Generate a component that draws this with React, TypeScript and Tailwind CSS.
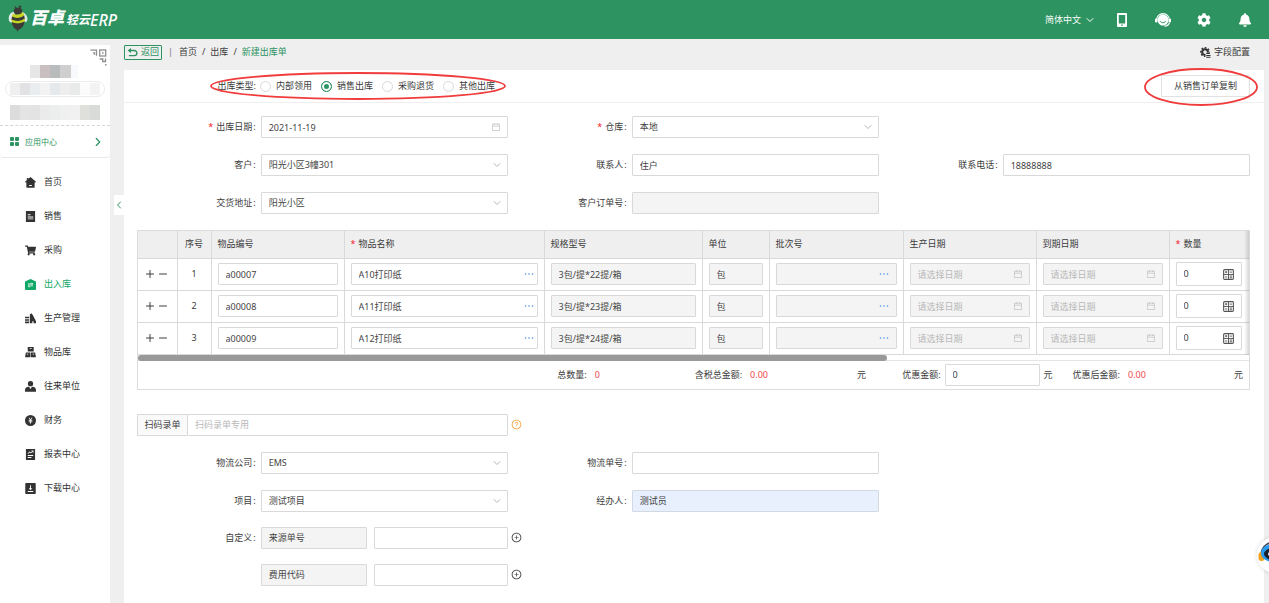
import React, { useState } from 'react';
import { ChevronDown, ChevronLeft, ChevronRight, Minus, Plus } from 'lucide-react';
import { FaBell, FaCog, FaShoppingCart } from 'react-icons/fa';
import {
  AiOutlineCalendar,
  AiOutlinePlusCircle,
  AiOutlineQuestionCircle,
} from 'react-icons/ai';

// Sidebar entries
const menuItems = [
  { key: 'home', label: '首页' },
  { key: 'sales', label: '销售' },
  { key: 'purchase', label: '采购' },
  { key: 'stock', label: '出入库' },
  { key: 'production', label: '生产管理' },
  { key: 'goods', label: '物品库' },
  { key: 'partners', label: '往来单位' },
  { key: 'finance', label: '财务' },
  { key: 'reports', label: '报表中心' },
  { key: 'downloads', label: '下载中心' },
];

// Outbound types
const outboundTypes = ['内部领用', '销售出库', '采购退货', '其他出库'];

// Order lines
const orderLines = [
  { code: 'a00007', name: 'A10打印纸', spec: '3包/提*22提/箱', unit: '包' },
  { code: 'a00008', name: 'A11打印纸', spec: '3包/提*23提/箱', unit: '包' },
  { code: 'a00009', name: 'A12打印纸', spec: '3包/提*24提/箱', unit: '包' },
];

const columns = [
  { title: '', width: 'w-[40px]' },
  { title: '序号', width: 'w-[34px]' },
  { title: '物品编号', width: 'w-[133px]' },
  { title: '物品名称', width: 'w-[200px]', required: true },
  { title: '规格型号', width: 'w-[158px]' },
  { title: '单位', width: 'w-[67px]' },
  { title: '批次号', width: 'w-[134px]' },
  { title: '生产日期', width: 'w-[133px]' },
  { title: '到期日期', width: 'w-[133px]' },
  { title: '数量', width: 'w-[81px]', required: true },
];

const boxClass =
  'block h-[22px] w-full rounded-[1px] border border-[#d9d9d9] bg-white px-[7px] text-[#444] outline-none placeholder:text-[#b8b8b8] disabled:bg-[#f4f4f4] disabled:opacity-100';

function BeeLogo() {
  return (
    <svg viewBox="0 0 20 27" className="h-[27px] w-5" aria-hidden="true">
      <path d="M8 3.5 6.8 1.2M12 3.5l1-2.4" stroke="#3b3a36" strokeWidth="1" fill="none" />
      <circle cx="11.8" cy="1.5" r="1" fill="#3b3a36" />
      <path d="M6.5 7C3 6.500.5 10 .7 14c.1 2.500 1.300 4 3.300 3.500L7 10z" fill="#dcebe3" />
      <path d="M13.500 7c3.200.3 6 3.800 6 7 0 2.400-1.500 3.700-3.500 3.200L13 10z" fill="#dcebe3" />
      <ellipse cx="10" cy="6" rx="4.200" ry="3.600" fill="#3b3a36" />
      <path d="M5 8.500c3 2 7 1.500 10-1.500l1.200 3.500c-3.500 3-8 3.500-12.200 1.300z" fill="#c6d420" />
      <path d="M4 11.500c4 2.300 8.700 1.800 12.200-1.200l.6 3.400c-3.800 2.800-8.800 3.200-13.300 1z" fill="#3b3a36" />
      <path d="M3.500 14.500c4.500 2.300 9.500 1.900 13.400-1l-.2 3c-3.700 2.500-8.700 2.900-12.900.8z" fill="#c6d420" />
      <path d="M3.800 17c4.200 2.200 9.200 1.800 12.900-.7-.4 4.500-3.200 7.500-6 8.300l-1.200 2.200-.8-2.100C6 23.500 4 20.500 3.800 17z" fill="#3b3a36" />
    </svg>
  );
}

function PhoneIcon() {
  return (
    <svg viewBox="0 0 16 16" className="size-4" aria-hidden="true">
      <path fill="currentColor" fillRule="evenodd" d="M4 1h8a1 1 0 0 1 1 1v12a1 1 0 0 1-1 1H4a1 1 0 0 1-1-1V2a1 1 0 0 1 1-1zm.8 2v8.500h6.400V3zM7.200 12.500v1.200h1.600v-1.200z" />
    </svg>
  );
}

function ServiceIcon() {
  return (
    <svg viewBox="0 0 16 16" className="size-4" aria-hidden="true">
      <path d="M1.600 8a6.400 6.400 0 0 1 12.800 0" fill="none" stroke="currentColor" strokeWidth="1.100" />
      <path fill="currentColor" d="M8 2.500A5.400 5.400 0 0 1 13.400 8c0 3-2.400 5.600-5.400 5.600S2.600 11 2.600 8 5 2.500 8 2.500z" />
      <rect x="0" y="6.500" width="2.500" height="4" rx="1" fill="currentColor" />
      <rect x="13.500" y="6.500" width="2.500" height="4" rx="1" fill="currentColor" />
      <path d="M5 9.200c1.500 2 4.500 2 6 0" fill="none" stroke="#2c9361" strokeWidth="1" />
      <path d="M14.500 10.500c-.6 2.200-2.200 3.500-5 3.800" fill="none" stroke="currentColor" strokeWidth="1.100" />
    </svg>
  );
}

function QrIcon() {
  return (
    <svg viewBox="0 0 17 17" className="size-[17px]" aria-hidden="true">
      <g fill="none" stroke="#8f8f8f" strokeWidth="1.300">
        <path d="M.5 1.200h6v5.500M3 3.800h1.500v2" />
        <rect x="9.700" y="1" width="6" height="6" />
        <path d="M9.700 10h3v2.500h2.800V9.500M12.500 9.800h1" />
      </g>
      <path fill="#8f8f8f" d="M12 3.300h1.500v1.500H12zM15 15h1.500v1.500H15z" />
    </svg>
  );
}

function MenuIcon({ name }: { name: string }) {
  if (name === 'purchase') {
    return <FaShoppingCart className="size-[11px]" />;
  }
  return (
    <svg viewBox="0 0 12 12" className="size-[11px]" fill="currentColor" fillRule="evenodd" aria-hidden="true">
      {name === 'home' && <path d="M6 0l6 5.200-.6.800h-.9v5.300a.5.5 0 0 1-.5.500H2a.5.5 0 0 1-.5-.5V6H.6L0 5.200 2 3.500V1.200h1.700V2zM4.500 8.800v1h3v-1z" />}
      {name === 'sales' && <path d="M1 0h10v12H1zM3 3.500v1.200h3V3.500zm0 2.400v1.200h6V5.900zM3 8.300v.8h6v-.8z" />}
      {name === 'stock' && <path d="M6 0l6 2.700V11a1 1 0 0 1-1 1H1a1 1 0 0 1-1-1V2.700zM3.200 5v1h5.600V5L7.200 3.700V5zm5.600 3V7H3.200v1l1.600 1.500V8z" />}
      {name === 'production' && <path d="M0 4h4.500v1.800H0zM0 6.700h4.500v1.800H0zM0 9.400h4.500v1.800H0zM5.300 11.200V1.500L7 .3l1.500 2L12 9v2.200H9.300V9H8v2.200z" />}
      {name === 'goods' && <path d="M3 0h6.500v4.800H3zM1 6h4.800v5.200H0zM6.400 6H11l1 5.200H6.400zM5.200 1v1h2V1zM2 7.300v1h1.600v-1zM8.400 7.300v1H10v-1z" />}
      {name === 'partners' && <path d="M6 0a2.900 2.900 0 1 1 0 5.800A2.900 2.900 0 0 1 6 0zM3.800 6.300h.7L6 9l1.500-2.700h.7C10.500 6.500 12 8 12 10v1.600H0V10c0-2 1.500-3.500 3.800-3.700z" />}
      {name === 'finance' && <path d="M6 0a6 6 0 1 1 0 12A6 6 0 0 1 6 0zM3.800 3l1.600 2.500H4v.9h1.500v.7H4V8h1.500v1.300h1V8H8v-.9H6.500v-.7H8v-.9H6.600L8.200 3H7.100L6 4.900 4.900 3z" />}
      {name === 'reports' && <path d="M1 0h10v12H1zM2.800 4.500l.7.700 1.800-1.500 1.200 1L8.500 2.800V4h.7V1.500H7v.7h.9L6.500 3.600l-1.200-1zM3 6.600v.9h6v-.9zM3 8.800v.9h4v-.9z" />}
      {name === 'downloads' && <path d="M1 0h10a.7.7 0 0 1 .7.700v10.600a.7.7 0 0 1-.7.700H1a.7.7 0 0 1-.7-.7V.7A.7.7 0 0 1 1 0zM5.500 2.500v3.300H4L6 8l2-2.200H6.500V2.500zM3 8.800v1h6v-1z" />}
    </svg>
  );
}

function CalculatorIcon() {
  return (
    <svg viewBox="0 0 12 12" className="size-[11px]" fill="none" stroke="#555" aria-hidden="true">
      <rect x=".7" y=".7" width="10.600" height="10.600" rx="1" strokeWidth="1.200" />
      <path d="M6 .7v10.600M.7 6h10.600M2.200 3.400h2.400M3.400 2.200v2.400M7.300 3.400h2.500M2.300 8.700h2.300M7.300 7.700h2.500M7.300 9.500h2.500" />
    </svg>
  );
}

function FieldConfigIcon() {
  return (
    <svg viewBox="0 0 12 12" className="size-[11px]" aria-hidden="true">
      <circle cx="5.500" cy="5.500" r="3.100" fill="none" stroke="#333" strokeWidth="2.200" />
      <circle cx="5.500" cy="5.500" r="4.700" fill="none" stroke="#333" strokeWidth="1.500" strokeDasharray="2 1.690" strokeDashoffset="1" />
      <rect x="6" y="6.200" width="6" height="6" fill="#efefef" />
      <path stroke="#333" strokeWidth="1.100" d="M6.800 7.200h4M6.800 9.200h4.700M6.800 11.200h4.700" />
    </svg>
  );
}

function Dots() {
  return (
    <svg viewBox="0 0 10 2" className="h-[2px] w-[10px]" fill="#4a90e2" aria-hidden="true">
      <circle cx="1.500" cy="1" r=".8" />
      <circle cx="5" cy="1" r=".8" />
      <circle cx="8.500" cy="1" r=".8" />
    </svg>
  );
}

function Field({ id, label, required, children }: {
  id?: string;
  label: string;
  required?: boolean;
  children: React.ReactNode;
}) {
  return (
    <div className="grid grid-cols-[1fr_2fr] items-center">
      <label htmlFor={id} className="flex justify-end gap-px pr-[5px]">
        {required && <span className="mr-[2px] text-[#f5222d]">*</span>}
        <span>{label}</span>
        {label && <span>:</span>}
      </label>
      {children}
    </div>
  );
}

function SelectBox({ id, value }: { id: string; value: string }) {
  return (
    <div className="relative">
      <select id={id} defaultValue={value} className={`${boxClass} appearance-none`}>
        <option>{value}</option>
      </select>
      <ChevronDown className="pointer-events-none absolute top-[5px] right-[5px] size-3 text-[#b5b5b5]" strokeWidth={2} />
    </div>
  );
}

function DateBox({ id, value, disabled, label }: {
  id?: string;
  value?: string;
  disabled?: boolean;
  label?: string;
}) {
  return (
    <div className="relative">
      <input
        id={id}
        type="text"
        aria-label={label}
        defaultValue={value}
        placeholder="请选择日期"
        disabled={disabled}
        className={boxClass}
      />
      <AiOutlineCalendar className="pointer-events-none absolute top-[6px] right-[7px] size-[10px] text-[#c4c4c4]" />
    </div>
  );
}

function Header() {
  return (
    <header className="flex h-[39px] shrink-0 items-center bg-[#2c9361] pr-4 pl-2 text-white">
      <a href="#" className="flex items-center pb-[3px]">
        <BeeLogo />
        <span className="ml-[2px] text-[17px] leading-5 font-black italic">百卓</span>
        <span className="ml-[2px] pt-1 text-[12px] leading-4 font-bold italic">轻云</span>
        <span className="pt-1 text-[16px] leading-4 font-medium italic">ERP</span>
      </a>
      <button type="button" className="mr-[18px] ml-auto flex items-center gap-[3px]">
        简体中文
        <ChevronDown className="size-3" strokeWidth={2} />
      </button>
      <div className="flex items-center gap-[25px]">
        <button type="button" aria-label="手机端"><PhoneIcon /></button>
        <button type="button" aria-label="客服"><ServiceIcon /></button>
        <button type="button" aria-label="设置" className="px-px"><FaCog className="size-[14px]" /></button>
        <button type="button" aria-label="通知" className="px-px"><FaBell className="size-[14px]" /></button>
      </div>
    </header>
  );
}

function Sidebar() {
  return (
    <aside className="mt-[6px] w-[110px] shrink-0 bg-white">
      {/* Masked account block */}
      <div className="relative h-[81px] border-b border-dashed border-[#d5d5d5]">
        <div className="absolute top-1 right-[3px]"><QrIcon /></div>
        <div className="flex flex-col pt-5">
          <div className="ml-[30px] flex h-[13px] w-[48px]">
            <span className="w-[10px] bg-[#e6e6e6]" />
            <span className="w-[10px] bg-[#c9bfc0]" />
            <span className="w-[10px] bg-[#b9bcbc]" />
            <span className="w-[11px] bg-[#cfcfcf]" />
            <span className="w-[7px] bg-[#f7f9fd]" />
          </div>
          <div className="mx-[5px] mt-[3px] flex h-4 items-center rounded-full border border-[#ececec] px-1">
            <span className="h-3 w-[10px] bg-[#efefef]" />
            <span className="h-3 w-[10px] bg-[#e2e2e4]" />
            <span className="h-3 w-[10px] bg-[#e9edf0]" />
            <span className="h-3 w-[10px] bg-[#f3f3f3]" />
            <span className="h-3 w-[10px] bg-[#e6e9ec]" />
            <span className="h-3 w-[10px] bg-[#eeeeee]" />
            <span className="h-3 w-[10px] bg-[#e8ebea]" />
            <span className="h-3 w-[10px] bg-[#fbfbfb]" />
            <span className="h-3 w-[10px] bg-[#f3f3f3]" />
          </div>
          <div className="mt-2 ml-[10px] flex h-[15px]">
            <span className="w-[10px] bg-[#dcdcdc]" />
            <span className="w-[10px] bg-[#e4e4e4]" />
            <span className="w-[10px] bg-[#e3e3e3]" />
            <span className="w-[10px] bg-[#ebebeb]" />
            <span className="w-[10px] bg-[#eceeee]" />
            <span className="w-[10px] bg-[#f0f0f0]" />
            <span className="w-[10px] bg-[#f1f1f1]" />
            <span className="w-[10px] bg-[#dfdfdb]" />
            <span className="w-[10px] bg-[#d9dbd9]" />
          </div>
        </div>
      </div>
      <a href="#apps" className="flex h-8 items-center rounded-b-[4px] border-b border-[#e9e9e9] pr-[5px] pl-[10px] text-[8px] text-[#2c9361]">
        <span className="grid grid-cols-2 gap-px">
          <span className="size-[4px] rounded-[1px] bg-[#2c9361]" />
          <span className="size-[4px] rounded-[1px] bg-[#2c9361]" />
          <span className="size-[4px] rounded-[1px] bg-[#2c9361]" />
          <span className="size-[4px] rounded-[1px] bg-[#2c9361]" />
        </span>
        <span className="ml-[6px]">应用中心</span>
        <ChevronRight className="ml-auto size-[14px]" strokeWidth={2} />
      </a>
      <nav className="pt-[7px]">
        {menuItems.map((item) => (
          <a
            key={item.key}
            href={`#${item.key}`}
            className={`flex h-[34px] items-center gap-2 pl-[25px] ${
              item.key === 'stock' ? 'text-[#10a866]' : 'text-[#333]'
            }`}
          >
            <MenuIcon name={item.key} />
            {item.label}
          </a>
        ))}
      </nav>
    </aside>
  );
}

function LinesTable() {
  return (
    <div className="mt-4 border border-[#dcdcdc]">
      <div className="relative overflow-hidden">
        <table className="-ml-px w-[calc(100%+2px)] table-fixed border-collapse">
          <thead>
            <tr className="h-[27px] bg-[#efefef]">
              {columns.map((col, index) => (
                <th
                  key={index}
                  className={`border-r border-b border-[#d9d9d9] font-normal ${col.width} ${
                    col.title === '序号' ? 'text-center' : 'px-[6px] text-left'
                  }`}
                >
                  {col.required && <span className="mr-[3px] text-[#f5222d]">*</span>}
                  {col.title}
                </th>
              ))}
            </tr>
          </thead>
          <tbody>
            {orderLines.map((line, index) => (
              <tr key={line.code} className="h-[32px] [&>td]:border-r [&>td]:border-b [&>td]:border-[#d9d9d9] [&>td]:px-[6px]">
                <td>
                  <div className="flex items-center justify-center gap-px">
                    <button type="button" aria-label="添加行"><Plus className="size-3" strokeWidth={2} /></button>
                    <button type="button" aria-label="删除行"><Minus className="size-3" strokeWidth={2} /></button>
                  </div>
                </td>
                <td className="text-center">{index + 1}</td>
                <td><input aria-label="物品编号" defaultValue={line.code} className={boxClass} /></td>
                <td>
                  <div className="relative">
                    <input aria-label="物品名称" defaultValue={line.name} className={boxClass} />
                    <button type="button" aria-label="选择物品" className="absolute top-[10px] right-1"><Dots /></button>
                  </div>
                </td>
                <td><input aria-label="规格型号" defaultValue={line.spec} disabled className={boxClass} /></td>
                <td><input aria-label="单位" defaultValue={line.unit} disabled className={boxClass} /></td>
                <td>
                  <div className="relative">
                    <input aria-label="批次号" disabled className={boxClass} />
                    <button type="button" aria-label="选择批次" className="absolute top-[10px] right-2"><Dots /></button>
                  </div>
                </td>
                <td><DateBox label="生产日期" disabled /></td>
                <td><DateBox label="到期日期" disabled /></td>
                <td>
                  <div className="mr-[2px] flex h-6 items-center rounded-[1px] border border-[#d9d9d9] bg-white px-[7px]">
                    <input aria-label="数量" defaultValue="0" className="w-full min-w-0 outline-none" />
                    <button type="button" aria-label="计算器"><CalculatorIcon /></button>
                  </div>
                </td>
              </tr>
            ))}
          </tbody>
        </table>
        <div className="pointer-events-none absolute inset-y-0 right-0 w-[5px] bg-gradient-to-l from-black/15 to-transparent" />
      </div>
      <div className="h-[6px] border-b border-[#e4e4e4] bg-white">
        <div className="h-[6px] w-[67.4%] rounded-full bg-[#999]" />
      </div>
      {/* Totals */}
      <div className="flex h-[28px] items-center justify-end pr-[6px]">
        <span>总数量:</span>
        <span className="ml-2 w-[100px] text-[#f0484c]">0</span>
        <span>含税总金额:</span>
        <span className="ml-2 w-[107px] text-[#f0484c]">0.00</span>
        <span>元</span>
        <label htmlFor="discount" className="ml-9">优惠金额:</label>
        <input
          id="discount"
          defaultValue="0"
          className="ml-1 h-[22px] w-[95px] rounded-[1px] border border-[#d9d9d9] px-[7px] outline-none"
        />
        <span className="ml-1">元</span>
        <span className="ml-5">优惠后金额:</span>
        <span className="ml-2 w-[106px] text-[#f0484c]">0.00</span>
        <span>元</span>
      </div>
    </div>
  );
}

export default function App() {
  const [type, setType] = useState('销售出库');

  return (
    <div className="flex min-h-screen flex-col bg-[#efefef] font-['Noto_Sans','Noto_Sans_CJK_SC',sans-serif] text-[9px] leading-3 text-[#3c3c3c]">
      <Header />
      <div className="flex flex-1">
        <Sidebar />

        <div className="flex w-[14px] shrink-0 flex-col items-end pt-[156px]">
          <button type="button" aria-label="收起菜单" className="flex h-5 w-[10px] items-center justify-center bg-white text-[#2c9361]">
            <ChevronLeft className="size-3 shrink-0" strokeWidth={2} />
          </button>
        </div>

        <main className="flex min-w-0 flex-1 flex-col pr-[5px]">
          {/* Breadcrumb */}
          <div className="flex h-[31px] items-center pr-[14px] pb-[5px]">
            <button type="button" className="flex h-[15px] items-center gap-[3px] rounded-[1px] border border-[#2c9361] px-[2px] text-[#2c9361]">
              <svg viewBox="0 0 12 10" className="h-[9px] w-[11px]" aria-hidden="true">
                <path d="M2.500 2.800H8a2.800 2.800 0 0 1 0 5.700H2" fill="none" stroke="currentColor" strokeWidth="1.500" />
                <path d="M4.300 0v5.600L.5 2.800z" fill="currentColor" />
              </svg>
              返回
            </button>
            <span className="mx-[6px] text-[#777]">|</span>
            <nav className="flex gap-[5px]">
              <a href="#home">首页</a>
              <span>/</span>
              <a href="#stock">出库</a>
              <span>/</span>
              <span className="text-[#2c9361]">新建出库单</span>
            </nav>
            <button type="button" className="ml-auto flex items-center gap-[3px]">
              <FieldConfigIcon />
              字段配置
            </button>
          </div>

          <form className="flex-1 bg-white pb-3">
            {/* Outbound type */}
            <div className="relative flex h-[33px] items-center border-b border-[#efefef] pr-[14px] pl-[13px]">
              <fieldset aria-label="出库类型" className="flex flex-1 items-center">
                <span className="w-[123px] pr-1 text-right">出库类型:</span>
                {outboundTypes.map((item) => (
                  <label key={item} className="mr-[9px] flex items-center gap-[5px]">
                    <input
                      type="radio"
                      name="outboundType"
                      checked={type === item}
                      onChange={() => setType(item)}
                      className="size-[11px] appearance-none rounded-full border border-[#d9d9d9] bg-white checked:border-[#2c9361] checked:bg-[#2c9361] checked:shadow-[inset_0_0_0_2px_white]"
                    />
                    {item}
                  </label>
                ))}
              </fieldset>
              <button type="button" className="h-[22px] w-[89px] rounded-[1px] border border-[#e2e2e2] bg-white">
                从销售订单复制
              </button>
              <svg viewBox="0 0 296 28" className="pointer-events-none absolute top-[2px] left-[86px] h-7 w-[296px]" aria-hidden="true">
                <ellipse cx="148" cy="14" rx="147" ry="13" fill="none" stroke="#f03c3c" strokeWidth="1.800" />
              </svg>
              <svg viewBox="0 0 114 38" className="pointer-events-none absolute top-[-2px] right-[6px] h-[38px] w-[114px]" aria-hidden="true">
                <ellipse cx="57" cy="19" rx="56" ry="18" fill="none" stroke="#f03c3c" strokeWidth="1.800" />
              </svg>
            </div>

            <div className="pt-[13px] pr-[14px] pl-[13px]">
              <div className="grid grid-cols-3 gap-y-4">
                <Field id="date" label="出库日期" required><DateBox id="date" value="2021-11-19" /></Field>
                <Field id="warehouse" label="仓库" required><SelectBox id="warehouse" value="本地" /></Field>
                <div />
                <Field id="customer" label="客户"><SelectBox id="customer" value="阳光小区3幢301" /></Field>
                <Field id="contact" label="联系人"><input id="contact" defaultValue="住户" className={boxClass} /></Field>
                <Field id="phone" label="联系电话"><input id="phone" defaultValue="18888888" className={boxClass} /></Field>
                <Field id="address" label="交货地址"><SelectBox id="address" value="阳光小区" /></Field>
                <Field id="customerOrder" label="客户订单号"><input id="customerOrder" disabled className={boxClass} /></Field>
              </div>

              <LinesTable />

              {/* Scan entry */}
              <div className="mt-6 flex items-center gap-[3px]">
                <div className="flex w-1/3">
                  <label htmlFor="scan" className="flex h-[22px] w-[50px] shrink-0 items-center justify-center rounded-l-[1px] border border-r-0 border-[#d9d9d9] bg-[#fafafa]">
                    扫码录单
                  </label>
                  <input id="scan" placeholder="扫码录单专用" className={boxClass} />
                </div>
                <AiOutlineQuestionCircle className="size-[11px] text-[#f7a540]" />
              </div>

              <div className="mt-4 grid grid-cols-3 gap-y-4">
                <Field id="carrier" label="物流公司"><SelectBox id="carrier" value="EMS" /></Field>
                <Field id="trackingNo" label="物流单号"><input id="trackingNo" className={boxClass} /></Field>
                <div />
                <Field id="project" label="项目"><SelectBox id="project" value="测试项目" /></Field>
                <Field id="handler" label="经办人">
                  <input
                    id="handler"
                    defaultValue="测试员"
                    className="block h-[22px] w-full rounded-[1px] border border-[#d3d9e3] bg-[#e8f0fe] px-[7px] outline-none"
                  />
                </Field>
              </div>

              {/* Custom fields */}
              <div className="mt-[15px] flex flex-col gap-[15px]">
                {['来源单号', '费用代码'].map((name, index) => (
                  <div key={name} className="flex items-center gap-[3px]">
                    <div className="w-1/3">
                      <Field id={`custom${index}`} label={index === 0 ? '自定义' : ''}>
                        <div className="grid grid-cols-[106fr_134fr] gap-[7px]">
                          <input aria-label="字段名称" defaultValue={name} disabled className={boxClass} />
                          <input id={`custom${index}`} aria-label={name} className={boxClass} />
                        </div>
                      </Field>
                    </div>
                    <button type="button" aria-label="添加字段"><AiOutlinePlusCircle className="size-[11px]" /></button>
                  </div>
                ))}
              </div>
            </div>
          </form>
        </main>
      </div>

      {/* Assistant bubble */}
      <button
        type="button"
        aria-label="智能助手"
        className="fixed -right-6 bottom-[30px] size-9 rounded-full bg-white shadow-[0_0_4px_rgba(0,0,0,0.15)]"
      >
        <svg viewBox="0 0 36 36" className="size-9" aria-hidden="true">
          <path d="M4 17C5 9 11 5 18 5s13 4 14 12" fill="none" stroke="#3c4654" strokeWidth="1.500" />
          <rect x="1.500" y="15" width="6" height="9" rx="3" fill="#f5a11c" />
          <rect x="28.500" y="15" width="6" height="9" rx="3" fill="#f5a11c" />
          <ellipse cx="18" cy="16" rx="14" ry="9.500" fill="#2b9bf0" />
          <ellipse cx="18" cy="17" rx="11" ry="6.500" fill="#17202c" />
          <circle cx="13" cy="17" r="2" fill="#fff" />
          <circle cx="23" cy="17" r="2" fill="#fff" />
          <path d="M12 30h12" stroke="#cfe4fa" strokeWidth="2" />
        </svg>
      </button>
    </div>
  );
}
